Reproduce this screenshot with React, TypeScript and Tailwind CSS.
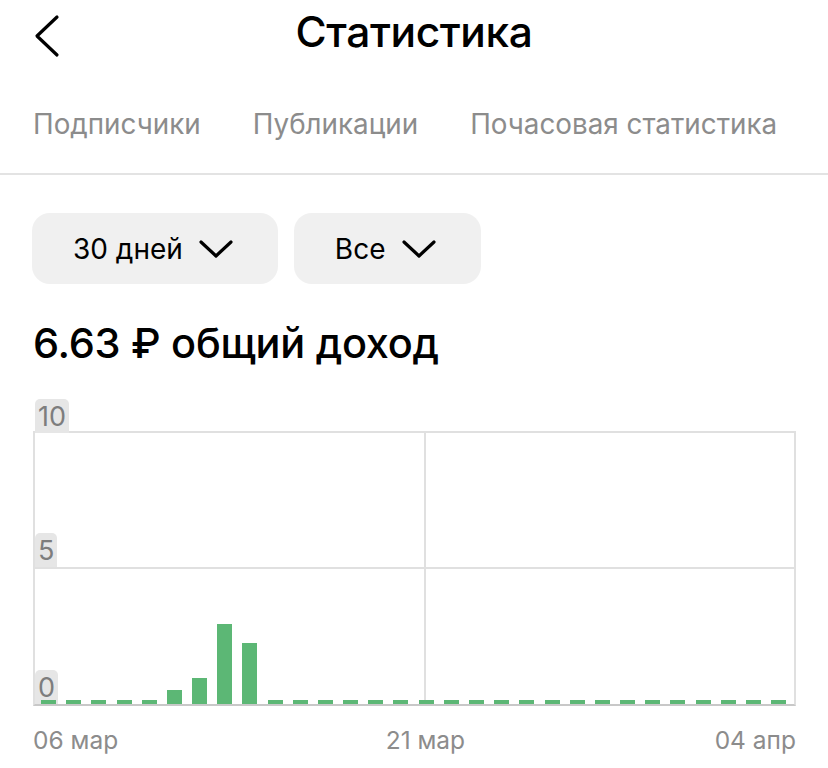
const income = [
  0, 0, 0, 0, 0, 0.5, 0.95, 2.95, 2.23, 0, 0, 0, 0, 0, 0,
  0, 0, 0, 0, 0, 0, 0, 0, 0, 0, 0, 0, 0, 0, 0,
];

// px per unit on the y scale (5 units per grid row)
const UNIT = 27.2;

function ChevronLeft() {
  return (
    <svg width="28" height="44" viewBox="0 0 28 44" fill="none">
      <path d="M24 3 L4 22 L24 41" stroke="#000" strokeWidth="3.2" strokeLinecap="round" strokeLinejoin="round" />
    </svg>
  );
}

function ChevronDown() {
  return (
    <svg width="36" height="20" viewBox="0 0 36 20" fill="none">
      <path d="M3 3 L18 17 L33 3" stroke="#000" strokeWidth="3.2" strokeLinecap="round" strokeLinejoin="round" />
    </svg>
  );
}

function AxisLabel({ children }: { children: React.ReactNode }) {
  return (
    <span className="block px-[3px] h-[34px] leading-[36px] rounded-t-[5px] bg-[#e6e6e6] text-[27px] text-[#7d7d7d]">
      {children}
    </span>
  );
}

export default function App() {
  return (
    <div className="w-[828px] h-[768px] bg-white overflow-hidden font-['Inter','Noto_Sans',sans-serif] text-black">
      <header className="grid grid-cols-[1fr_auto_1fr] items-center h-[64px]">
        <button className="pl-[33px] pt-[2px]">
          <ChevronLeft />
        </button>
        <h1 className="pb-[7px] text-[42.5px] font-medium tracking-[-0.4px]">Статистика</h1>
        <div />
      </header>

      <nav className="flex gap-[52px] px-[33px] pt-[44px] pb-[33px] border-b-2 border-[#e3e3e3] text-[27.8px] leading-[32px] text-[#8c8c8c]">
        <span>Подписчики</span>
        <span>Публикации</span>
        <span>Почасовая статистика</span>
      </nav>

      <div className="flex gap-[16px] px-[32px] mt-[38px]">
        <button className="flex items-center gap-[15px] h-[71px] pl-[41px] pr-[44px] rounded-[18px] bg-[#f0f0f0] text-[28px]">
          30 дней
          <ChevronDown />
        </button>
        <button className="flex items-center gap-[15px] h-[71px] pl-[41px] pr-[44px] rounded-[18px] bg-[#f0f0f0] text-[28px]">
          Все
          <ChevronDown />
        </button>
      </div>

      <h2 className="mt-[35px] px-[33px] text-[41.5px] leading-[48px] font-medium tracking-[-0.3px]">
        6.63 ₽ общий доход
      </h2>

      <div className="relative ml-[33px] mt-[64px] w-[763px] h-[275px] border-2 border-b-2 border-[#e0e0e0] border-b-[#c8c8c8]">
        <div className="absolute left-0 bottom-full">
          <AxisLabel>10</AxisLabel>
        </div>
        <div className="grid grid-cols-[391px_1fr] grid-rows-2 h-full">
          <div className="relative border-r-2 border-b-2 border-[#e0e0e0]">
            <div className="absolute left-0 bottom-0">
              <AxisLabel>5</AxisLabel>
            </div>
          </div>
          <div className="border-b-2 border-[#e0e0e0]" />
          <div className="relative border-r-2 border-[#e0e0e0]">
            <div className="absolute left-0 bottom-0">
              <AxisLabel>0</AxisLabel>
            </div>
          </div>
          <div />
        </div>
        <div className="absolute left-[1px] bottom-0 w-[755px] h-full flex items-end">
          {income.map((v, i) => (
            <div key={i} className="flex-1 flex justify-center">
              <div className="w-[15px] bg-[#5cb775]" style={{ height: Math.max(4, v * UNIT) }} />
            </div>
          ))}
        </div>
      </div>

      <div className="flex justify-between ml-[33px] w-[763px] mt-[18px] text-[24.5px] leading-[32px] text-[#8c8c8c]">
        <span>06 мар</span>
        <span className="-mr-[18px]">21 мар</span>
        <span>04 апр</span>
      </div>
    </div>
  );
}
